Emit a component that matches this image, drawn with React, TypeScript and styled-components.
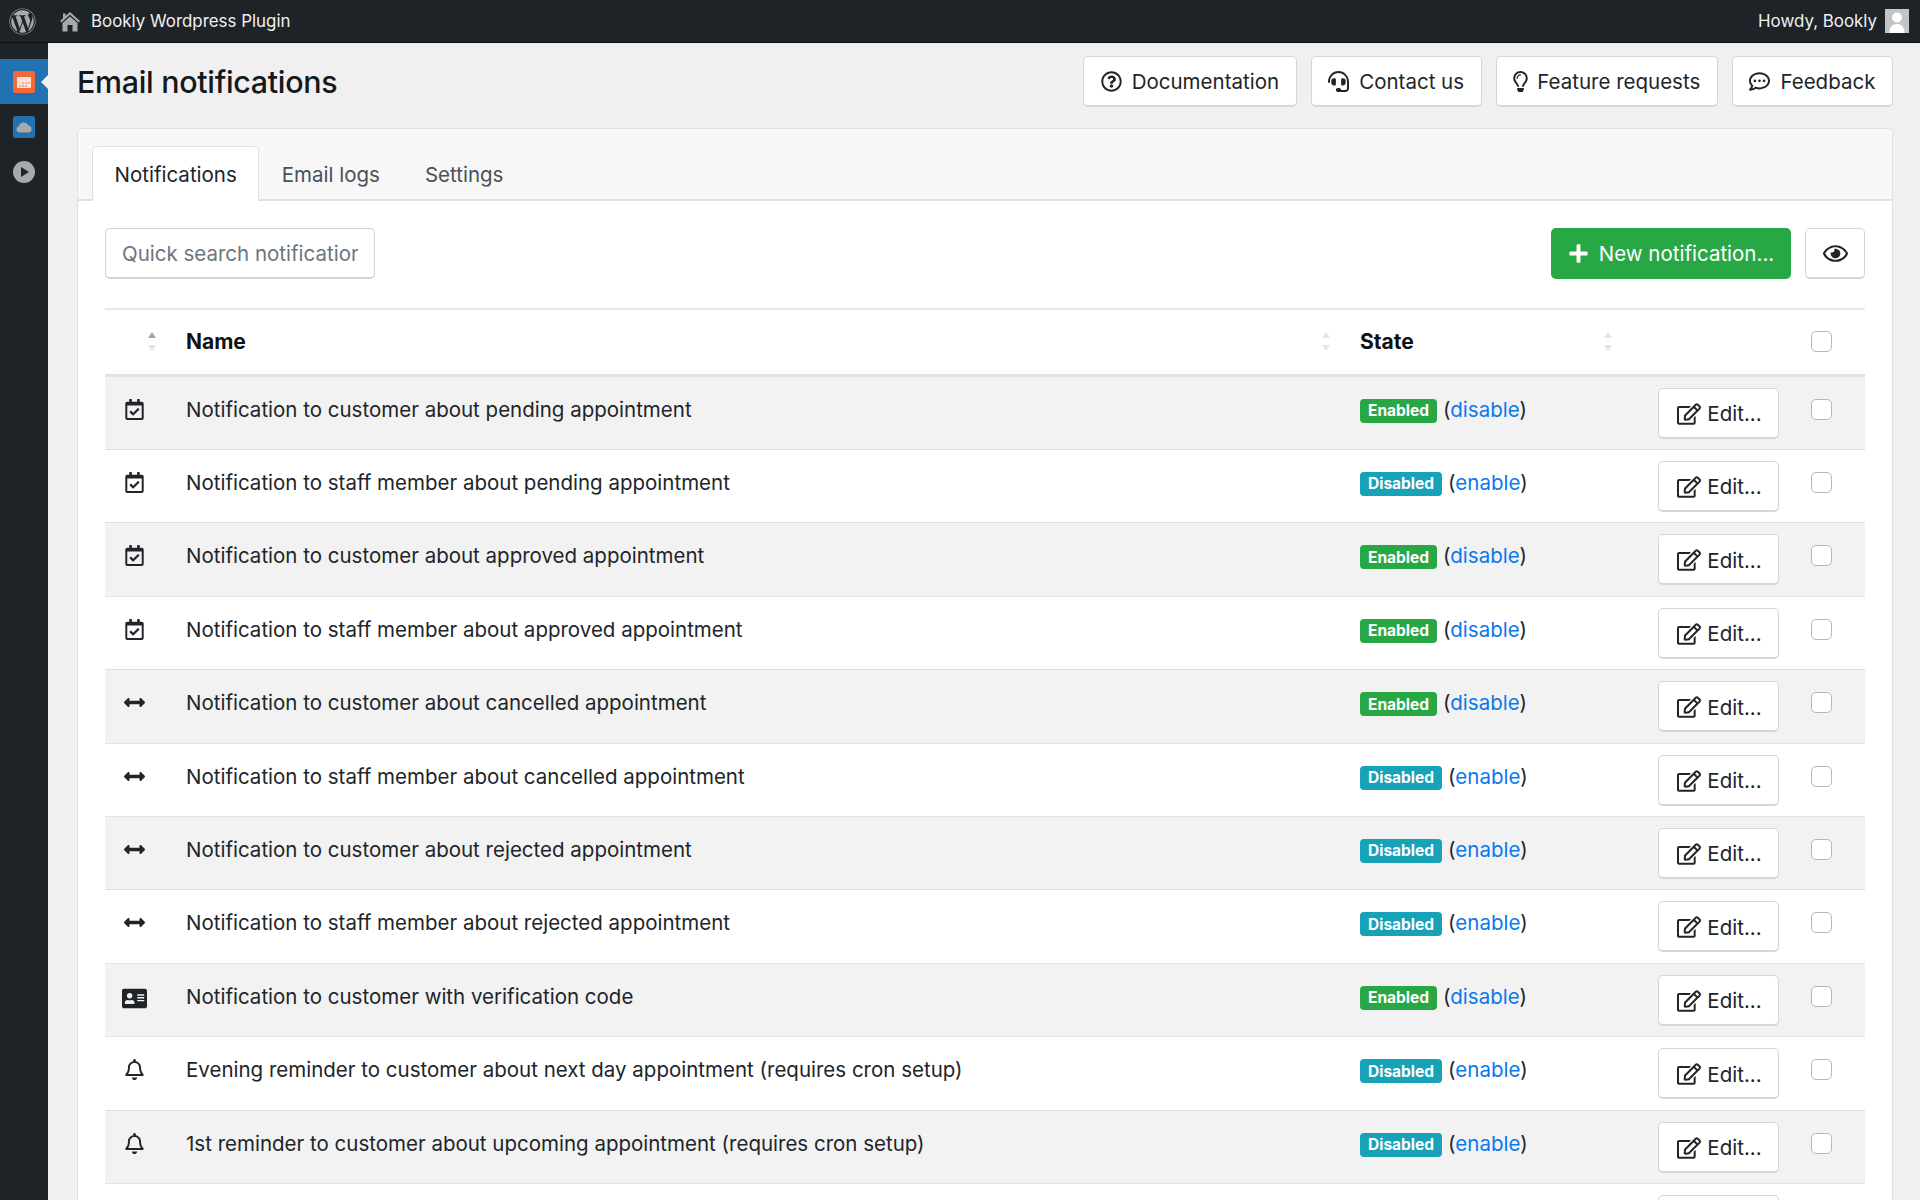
import React from 'react';
import styled, { createGlobalStyle } from 'styled-components';
import {
  FaAddressCard,
  FaArrowsAltH,
  FaHeadset,
  FaPlus,
  FaRegBell,
  FaRegCalendarCheck,
  FaRegCommentDots,
  FaRegEdit,
  FaRegEye,
  FaRegLightbulb,
  FaRegQuestionCircle,
  FaWordpress,
} from 'react-icons/fa';

const GlobalStyle = createGlobalStyle`
  html, body {
    margin: 0;
    padding: 0;
    background: #f0f0f1;
  }
  * {
    box-sizing: border-box;
  }
`;

const Page = styled.div`
  width: 1920px;
  height: 1200px;
  overflow: hidden;
  display: flex;
  flex-direction: column;
  font-family: Inter, 'Liberation Sans', sans-serif;
  font-size: 20.5px;
  color: #212529;
`;

const AdminBar = styled.header`
  flex: none;
  height: 43px;
  background: #1d2327;
  border-bottom: 1px solid #0c0f11;
  display: flex;
  align-items: center;
  padding: 0 11px 0 9px;
  color: #f0f0f1;
  font-size: 16.9px;
`;

const WpLogo = styled(FaWordpress)`
  width: 27px;
  height: 27px;
  color: #a7aaad;
  margin-right: 24px;
`;

const SiteName = styled.span`
  margin-left: 11px;
`;

const Howdy = styled.span`
  margin-left: auto;
`;

const Avatar = styled.svg`
  width: 24px;
  height: 24px;
  margin-left: 8px;
`;

const Body = styled.div`
  flex: 1;
  display: flex;
  min-height: 0;
`;

const SideMenu = styled.nav`
  flex: none;
  width: 48px;
  background: #1d2327;
  padding-top: 16px;
`;

const MenuItem = styled.div<{ $active?: boolean }>`
  position: relative;
  height: 45px;
  display: flex;
  align-items: center;
  justify-content: center;
  background: ${(p) => (p.$active ? '#2271b1' : 'transparent')};

  ${(p) =>
    p.$active &&
    `&::after {
      content: '';
      position: absolute;
      right: 0;
      top: 50%;
      margin-top: -7px;
      border: 7px solid transparent;
      border-right-color: #f0f0f1;
      border-left-width: 0;
    }`}
`;

const Main = styled.main`
  flex: 1;
  min-width: 0;
  padding: 13px 27px 0 29px;
`;

const TitleRow = styled.div`
  display: flex;
  align-items: center;
  justify-content: space-between;
  height: 51px;
  margin-bottom: 21px;
`;

const Title = styled.h1`
  margin: 0;
  font-size: 30.4px;
  font-weight: 500;
  color: #16191c;
  letter-spacing: -0.3px;
`;

const HeaderActions = styled.div`
  display: flex;
  gap: 14px;
`;

const Button = styled.button`
  height: 51px;
  display: inline-flex;
  align-items: center;
  padding: 0 16.6px;
  gap: 10px;
  background: #fff;
  border: 1px solid #d4d6da;
  border-bottom-width: 2px;
  border-radius: 5px;
  font: inherit;
  color: #212529;
  white-space: nowrap;
`;

const HeadIcon = styled.span<{ $narrow?: boolean }>`
  display: inline-flex;
  justify-content: center;
  flex: none;
  width: ${(p) => (p.$narrow ? '14px' : 'auto')};
  font-size: 21px;

  svg {
    flex: none;
  }
`;

const Card = styled.section`
  background: #fff;
  border: 1px solid #dfe1e4;
  border-radius: 5px 5px 0 0;
`;

const TabBar = styled.div`
  height: 72px;
  padding: 17px 0 0 14px;
  background: #f7f7f7;
  border-bottom: 2px solid #dfe1e4;
  display: flex;
  border-radius: 5px 5px 0 0;
`;

const Tab = styled.div<{ $active?: boolean }>`
  height: 55px;
  padding: 0 21.5px;
  display: flex;
  align-items: center;
  color: ${(p) => (p.$active ? '#212529' : '#495057')};
  background: ${(p) => (p.$active ? '#fff' : 'transparent')};
  border: 1px solid ${(p) => (p.$active ? '#dfe1e4' : 'transparent')};
  border-bottom: 0;
  border-radius: 5px 5px 0 0;
`;

const CardBody = styled.div`
  padding: 27px 27px 0;
`;

const Toolbar = styled.div`
  display: flex;
  align-items: center;
  gap: 14px;
  padding-bottom: 29px;
`;

const SearchInput = styled.input`
  width: 270px;
  height: 51px;
  padding: 0 16px;
  margin-right: auto;
  background: #fff;
  border: 1px solid #ced4da;
  border-bottom-width: 2px;
  border-radius: 5px;
  font: inherit;
  color: #495057;

  &::placeholder {
    color: #6c757d;
    opacity: 1;
  }
`;

const NewButton = styled(Button)`
  width: 240px;
  padding: 0;
  justify-content: center;
  background: #28a745;
  border: 0;
  color: #fff;
`;

const EyeButton = styled(Button)`
  width: 60px;
  padding: 0;
  justify-content: center;
  font-size: 25px;
`;

const Row = styled.div<{ $striped?: boolean }>`
  display: grid;
  grid-template-columns: 66px 1174px 276px 172px 72px;
  height: 73.4px;
  border-bottom: 1px solid #dee2e6;
  background: ${(p) => (p.$striped ? '#f2f2f3' : '#fff')};
`;

const HeadRow = styled(Row)`
  height: 68.6px;
  border-top: 2px solid #e6e8ea;
  border-bottom: 3px solid #dee2e6;
  font-size: 21px;
  font-weight: 700;
  color: #111;
`;

const HeadCell = styled.div`
  display: flex;
  align-items: center;
  justify-content: space-between;
  padding: 0 15px;
`;

const StateHeadCell = styled(HeadCell)`
  padding-right: 9px;
`;

const SortCarets = styled.span<{ $on?: boolean }>`
  flex: none;
  margin-left: auto;
  display: flex;
  flex-direction: column;
  gap: 7px;

  &::before,
  &::after {
    content: '';
    display: block;
    border-left: 4px solid transparent;
    border-right: 4px solid transparent;
  }
  &::before {
    border-bottom: 6px solid ${(p) => (p.$on ? '#a3a6aa' : '#e2e4e7')};
  }
  &::after {
    border-top: 6px solid #e2e4e7;
  }
`;

const IconCell = styled.div`
  display: flex;
  justify-content: center;
  padding-top: 22px;
  padding-right: 8px;
  font-size: 21px;
  color: #212529;
`;

const TextCell = styled.div`
  padding: 17px 15px 0;
  line-height: 31px;
  white-space: nowrap;
`;

const StateCell = styled(TextCell)`
  display: flex;
  align-items: flex-start;
  gap: 6px;
`;

const Badge = styled.span<{ $on: boolean }>`
  height: 24px;
  margin-top: 5px;
  padding: 0 8px;
  display: inline-flex;
  align-items: center;
  border-radius: 4px;
  background: ${(p) => (p.$on ? '#28a745' : '#17a2b8')};
  color: #fff;
  font-size: 15.5px;
  font-weight: 700;
`;

const ToggleLink = styled.a`
  color: #0b78ec;
`;

const ActionCell = styled.div`
  display: flex;
  justify-content: flex-end;
  align-items: flex-start;
  padding: 11px 14px 0 0;
`;

const EditButton = styled(Button)`
  width: 121px;
  padding: 2px 0 0 2px;
  justify-content: center;
  gap: 6px;
`;

const CheckCell = styled.div`
  padding: 22px 0 0 18px;
`;

const HeadCheckCell = styled(CheckCell)`
  padding-top: 21px;
`;

const CheckBox = styled.span`
  display: block;
  width: 21px;
  height: 21px;
  background: #fff;
  border: 1px solid #b4b7bb;
  border-radius: 5px;
`;

const notifications = [
  { icon: 'calendar', name: 'Notification to customer about pending appointment', enabled: true },
  { icon: 'calendar', name: 'Notification to staff member about pending appointment', enabled: false },
  { icon: 'calendar', name: 'Notification to customer about approved appointment', enabled: true },
  { icon: 'calendar', name: 'Notification to staff member about approved appointment', enabled: true },
  { icon: 'arrows', name: 'Notification to customer about cancelled appointment', enabled: true },
  { icon: 'arrows', name: 'Notification to staff member about cancelled appointment', enabled: false },
  { icon: 'arrows', name: 'Notification to customer about rejected appointment', enabled: false },
  { icon: 'arrows', name: 'Notification to staff member about rejected appointment', enabled: false },
  { icon: 'card', name: 'Notification to customer with verification code', enabled: true },
  { icon: 'bell', name: 'Evening reminder to customer about next day appointment (requires cron setup)', enabled: false },
  { icon: 'bell', name: '1st reminder to customer about upcoming appointment (requires cron setup)', enabled: false },
];

const RowIcon = ({ kind }: { kind: string }) => {
  if (kind === 'calendar') return <FaRegCalendarCheck />;
  if (kind === 'arrows') return <FaArrowsAltH />;
  if (kind === 'card') return <FaAddressCard size={25} />;
  return <FaRegBell />;
};

const HomeIcon = () => (
  <svg width="20" height="21" viewBox="0 0 20 21">
    <path
      fill="#a7aaad"
      d="M10 1 L20 10 L18.6 11.4 L10 3.8 L1.4 11.4 L0 10 L3 7.3 L3 2.5 L5.5 2.5 L5.5 5 Z M10 5.4 L17.5 12 L17.5 20.5 L12.5 20.5 L12.5 14 L7.5 14 L7.5 20.5 L2.5 20.5 L2.5 12 Z"
    />
  </svg>
);

const BooklyIcon = () => (
  <svg width="22" height="22" viewBox="0 0 22 22">
    <rect width="22" height="22" rx="2" fill="#f4683a" />
    <rect x="4" y="6" width="14" height="11" rx="1" fill="#fbe3da" />
    <path d="M9 11h2v2H9zM12 11h2v2h-2zM15 11h2v2h-2zM6 14h2v2H6zM9 14h2v2H9zM12 14h2v2h-2z" fill="#f7a78c" />
  </svg>
);

const CloudIcon = () => (
  <svg width="22" height="22" viewBox="0 0 22 22">
    <rect width="22" height="22" rx="2" fill="#2271b1" />
    <path
      fill="#a7aaad"
      d="M6.5 16.5a3.2 3.2 0 0 1-.6-6.3 5 5 0 0 1 9.4-.6 3.5 3.5 0 0 1 .6 6.9Z"
    />
  </svg>
);

const PlayIcon = () => (
  <svg width="22" height="22" viewBox="0 0 22 22">
    <circle cx="11" cy="11" r="11" fill="#a7aaad" />
    <path d="M8 6l8 5-8 5z" fill="#1d2327" />
  </svg>
);

const App = () => (
  <Page>
    <GlobalStyle />
    <AdminBar>
      <WpLogo />
      <HomeIcon />
      <SiteName>Bookly Wordpress Plugin</SiteName>
      <Howdy>Howdy, Bookly</Howdy>
      <Avatar viewBox="0 0 24 24">
        <rect width="24" height="24" fill="#c3c4c7" />
        <circle cx="12" cy="8.5" r="5" fill="#fff" />
        <path d="M4.5 24c0-6 3-9 7.5-9s7.5 3 7.5 9Z" fill="#fff" />
      </Avatar>
    </AdminBar>
    <Body>
      <SideMenu>
        <MenuItem $active>
          <BooklyIcon />
        </MenuItem>
        <MenuItem>
          <CloudIcon />
        </MenuItem>
        <MenuItem>
          <PlayIcon />
        </MenuItem>
      </SideMenu>
      <Main>
        <TitleRow>
          <Title>Email notifications</Title>
          <HeaderActions>
            <Button>
              <HeadIcon><FaRegQuestionCircle /></HeadIcon>
              Documentation
            </Button>
            <Button>
              <HeadIcon><FaHeadset /></HeadIcon>
              Contact us
            </Button>
            <Button>
              <HeadIcon $narrow><FaRegLightbulb /></HeadIcon>
              Feature requests
            </Button>
            <Button>
              <HeadIcon><FaRegCommentDots /></HeadIcon>
              Feedback
            </Button>
          </HeaderActions>
        </TitleRow>
        <Card>
          <TabBar>
            <Tab $active>Notifications</Tab>
            <Tab>Email logs</Tab>
            <Tab>Settings</Tab>
          </TabBar>
          <CardBody>
            <Toolbar>
              <SearchInput placeholder="Quick search notifications" />
              <NewButton>
                <HeadIcon><FaPlus /></HeadIcon>
                New notification...
              </NewButton>
              <EyeButton><FaRegEye /></EyeButton>
            </Toolbar>
            <HeadRow>
              <HeadCell>
                <SortCarets $on />
              </HeadCell>
              <HeadCell>
                Name
                <SortCarets />
              </HeadCell>
              <StateHeadCell>
                State
                <SortCarets />
              </StateHeadCell>
              <div />
              <HeadCheckCell><CheckBox /></HeadCheckCell>
            </HeadRow>
            {notifications.map((n, i) => (
              <Row key={n.name} $striped={i % 2 === 0}>
                <IconCell><RowIcon kind={n.icon} /></IconCell>
                <TextCell>{n.name}</TextCell>
                <StateCell>
                  <Badge $on={n.enabled}>{n.enabled ? 'Enabled' : 'Disabled'}</Badge>
                  <span>
                    (<ToggleLink>{n.enabled ? 'disable' : 'enable'}</ToggleLink>)
                  </span>
                </StateCell>
                <ActionCell>
                  <EditButton>
                    <HeadIcon><FaRegEdit size={24} /></HeadIcon>
                    Edit...
                  </EditButton>
                </ActionCell>
                <CheckCell><CheckBox /></CheckCell>
              </Row>
            ))}
            {/* the next row is only cut in by the window, just its button frame shows */}
            <Row>
              <div />
              <div />
              <div />
              <ActionCell><EditButton /></ActionCell>
            </Row>
          </CardBody>
        </Card>
      </Main>
    </Body>
  </Page>
);

export default App;
